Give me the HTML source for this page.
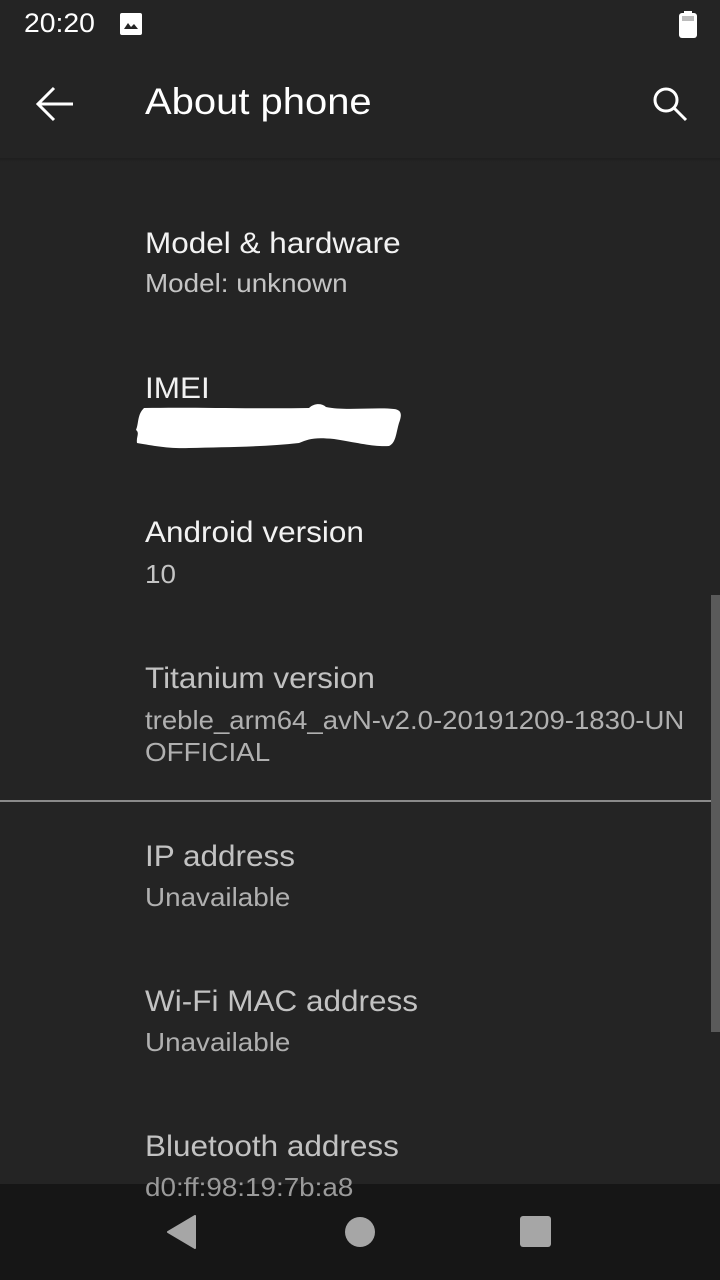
<!DOCTYPE html>
<html><head><meta charset="utf-8"><style>
html,body{margin:0;padding:0}
body{width:720px;height:1280px;background:#242424;position:relative;overflow:hidden;font-family:"Liberation Sans",sans-serif}
.t{position:absolute;left:145px;white-space:nowrap;line-height:1;transform-origin:left top}
.h{font-size:30px;color:#f2f2f2;transform:scaleX(1.05)}
.s{font-size:26px;color:#c4c4c4;transform:scaleX(1.07)}
.g.h{color:#c2c2c2}
.g.s{color:#b0b0b0}
</style></head><body>
<div class="t" style="left:24px;top:10px;font-size:27px;color:#fff;transform:scaleX(1.05)">20:20</div>
<svg style="position:absolute;left:120px;top:13px" width="22" height="22" viewBox="0 0 22 22"><rect x="0" y="0" width="22" height="22" rx="2" fill="#fff"/><path d="M4 16 L8 10 L11 14 L14 11 L18 16 Z" fill="#242424"/></svg>
<svg style="position:absolute;left:679px;top:11px" width="18" height="27" viewBox="0 0 18 27"><rect x="5" y="0" width="8" height="3" fill="#fff"/><rect x="0" y="2" width="18" height="25" rx="3" fill="#fff"/><rect x="3" y="5" width="12" height="5" fill="#bbb"/></svg>
<svg style="position:absolute;left:36px;top:86px" width="40" height="36" viewBox="0 0 40 36"><path d="M2 18 H37 M18 2 L2 18 L18 34" stroke="#fff" stroke-width="3" fill="none"/></svg>
<div class="t" style="top:83px;font-size:37px;color:#fff;transform:scaleX(1.08)">About phone</div>
<svg style="position:absolute;left:652px;top:86px" width="38" height="36" viewBox="0 0 38 36"><circle cx="14" cy="14" r="11" stroke="#fff" stroke-width="3" fill="none"/><path d="M22 22 L34 34" stroke="#fff" stroke-width="3"/></svg>
<div style="position:absolute;left:0;top:158px;width:720px;height:4px;background:linear-gradient(#1e1e1e,#242424)"></div>

<div class="t h" style="top:229px">Model &amp; hardware</div>
<div class="t s" style="top:270px">Model: unknown</div>
<div class="t h" style="top:374px">IMEI</div>
<svg style="position:absolute;left:134px;top:403px" width="270" height="50" viewBox="0 0 270 50"><path d="M10 5 C60 4 120 6 175 5 C180 0 188 0 192 4 C210 8 240 4 260 6 C268 7 268 12 265 20 C262 30 262 40 255 43 C240 44 225 40 200 36 C180 34 175 36 165 40 C130 44 90 44 55 45 C35 46 15 42 3 40 C2 34 6 30 2 27 C5 20 3 12 10 5 Z" fill="#fff"/></svg>
<div class="t h" style="top:518px">Android version</div>
<div class="t s" style="top:561px">10</div>
<div class="t g h" style="top:664px">Titanium version</div>
<div class="t g s" style="top:707px;transform:scaleX(1.06)">treble_arm64_avN-v2.0-20191209-1830-UN</div>
<div class="t g s" style="top:739px">OFFICIAL</div>
<div style="position:absolute;left:0;top:800px;width:720px;height:2px;background:#8a8a8a"></div>
<div class="t g h" style="top:842px">IP address</div>
<div class="t g s" style="top:884px">Unavailable</div>
<div class="t g h" style="top:987px">Wi-Fi MAC address</div>
<div class="t g s" style="top:1029px">Unavailable</div>
<div class="t g h" style="top:1132px">Bluetooth address</div>
<div style="position:absolute;left:711px;top:595px;width:9px;height:437px;background:#5a5a5a"></div>
<div style="position:absolute;left:0;top:1184px;width:720px;height:96px;background:#161616"></div>
<div class="t g s" style="top:1174px;color:#9a9a9a">d0:ff:98:19:7b:a8</div>
<svg style="position:absolute;left:166px;top:1215px" width="32" height="34" viewBox="0 0 32 34"><path d="M29 1 L29 33 L2 17 Z" fill="#a6a6a6" stroke="#a6a6a6" stroke-width="2" stroke-linejoin="round"/></svg>
<div style="position:absolute;left:345px;top:1217px;width:30px;height:30px;border-radius:50%;background:#a6a6a6"></div>
<div style="position:absolute;left:520px;top:1216px;width:31px;height:31px;border-radius:3px;background:#a6a6a6"></div>
</body></html>
